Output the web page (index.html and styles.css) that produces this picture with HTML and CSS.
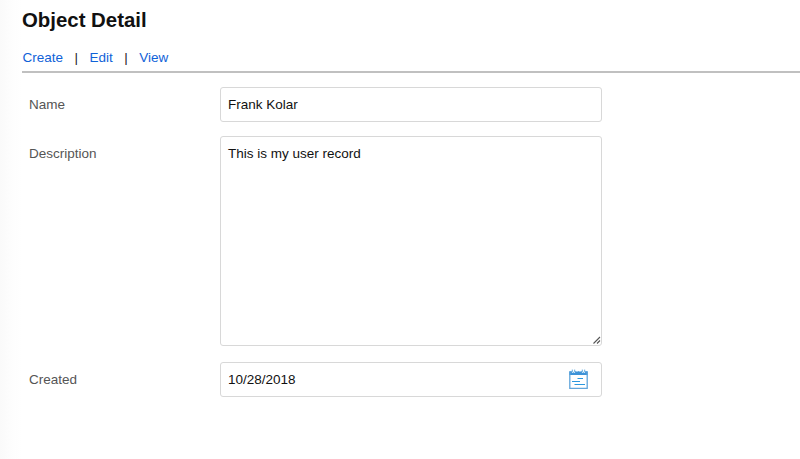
FILE: index.html
```html
<!DOCTYPE html>
<html lang="en">
<head>
<meta charset="utf-8">
<title>Object Detail</title>
<link rel="stylesheet" href="styles.css">
</head>
<body>
<main class="page">
  <h1 class="title">Object Detail</h1>
  <nav class="actions">
    <a class="link">Create</a><span class="sep">|</span><a class="link">Edit</a><span class="sep">|</span><a class="link">View</a>
  </nav>
  <div class="form">
    <div class="label">Name</div>
    <div class="field">Frank Kolar</div>
    <div class="label">Description</div>
    <div class="field area">This is my user record
      <svg class="grip" width="8" height="8" viewBox="0 0 8 8"><path d="M.5 7.5l6.5-6.5M4 7.5l3-3" fill="none" stroke="#555" stroke-width="1.1"/></svg>
    </div>
    <div class="label">Created</div>
    <div class="field date"><span>10/28/2018</span>
      <svg class="calendar" width="21" height="21" viewBox="0 0 21 21" fill="none">
        <path d="M1.2 2.2h18.6v3.8H1.2z" fill="#3d93d8"/>
        <path d="M1.8 3v16.3h17.4V3" stroke="#61a5db" stroke-width="1.3"/>
        <path d="M5.5 0v3.8M15.5 0v3.8" stroke="#fff" stroke-width="3.2"/>
        <path d="M9 1v2M12 1v2" stroke="#fff" stroke-width=".7"/>
        <path d="M4.3.6v1.8q1.2 2 2.4 0V.6M14.3.6v1.8q1.2 2 2.4 0V.6" stroke="#4b9edb" stroke-width=".9"/>
        <path d="M9.5 9.5h5.5M4 12.5h8M6.5 15.5h10.5" stroke="#2b98df" stroke-width="1.2"/>
      </svg>
    </div>
  </div>
</main>
</body>
</html>
```
FILE: styles.css
```css
* { box-sizing: border-box; }
body {
  margin: 0;
  height: 459px;
  overflow: hidden;
  background: linear-gradient(to right, #fafafa, #fefefe 14px, #fff 22px);
  font: 13.5px/18px "Liberation Sans", Arial, sans-serif;
  color: #111;
}
.page { padding: 8px 0 0 22px; }
.title { margin: 0; font-size: 20.4px; line-height: 24px; color: #111; }
.actions {
  display: flex;
  height: 41px;
  padding: 17px 0 0 0.5px;
  border-bottom: 2px solid #c0c0c0;
}
.link { color: #0f62d8; }
.sep { width: 26.5px; text-align: center; color: #222; }
.form {
  display: grid;
  grid-template-columns: 191px 382px;
  grid-template-rows: 35px 212px 35px;
  row-gap: 14px;
  padding: 14px 0 0 7px;
}
.label { padding-top: 9px; color: #555; }
.field {
  padding: 8px 7px;
  border: 1px solid #d8d8d8;
  border-radius: 3px;
  background: #fff;
}
.area { position: relative; height: 210px; }
.grip { position: absolute; right: 0; bottom: 1px; }
.date {
  display: flex;
  align-items: center;
  justify-content: space-between;
  padding: 0 12px 0 7px;
}
```
